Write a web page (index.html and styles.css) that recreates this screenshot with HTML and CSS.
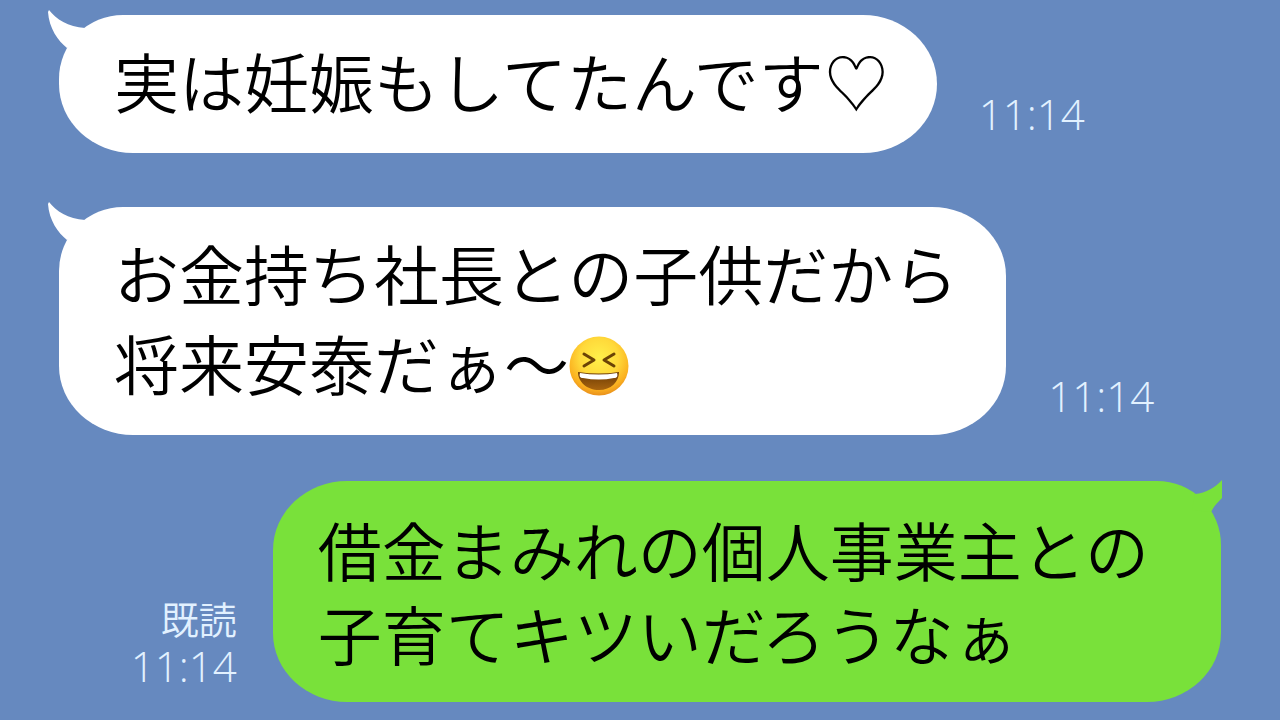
FILE: index.html
```html
<!DOCTYPE html>
<html lang="ja">
<head>
    <meta charset="UTF-8">
    <meta name="viewport" content="width=device-width, initial-scale=1.0">
    <title>トーク</title>
    <link rel="stylesheet" href="styles.css">
</head>
<body>
    <main class="talk">
        <div class="message received">
            <div class="bubble">
                <svg class="tail" viewBox="0 0 38 40" aria-hidden="true">
                    <path d="M1 0 C8 9 20 17 37 18 L38 30 L19 38 C10 31 1 18 0 2 Z"/>
                </svg>
                <p>実は妊娠もしてたんです♡</p>
            </div>
            <div class="meta"><time>11:14</time></div>
        </div>

        <div class="message received">
            <div class="bubble">
                <svg class="tail" viewBox="0 0 38 40" aria-hidden="true">
                    <path d="M1 0 C8 9 20 17 37 18 L38 30 L19 38 C10 31 1 18 0 2 Z"/>
                </svg>
                <p>お金持ち社長との子供だから<br>将来安泰だぁ〜<svg class="emoji" viewBox="0 0 60 60" role="img" aria-label="大笑い">
                    <defs>
                        <radialGradient id="face" cx="50%" cy="36%" r="66%">
                            <stop offset="0" stop-color="#fff04a"/>
                            <stop offset="0.5" stop-color="#ffd93a"/>
                            <stop offset="0.82" stop-color="#fbb01f"/>
                            <stop offset="1" stop-color="#e58a1c"/>
                        </radialGradient>
                        <linearGradient id="mouth" x1="0" y1="0" x2="0" y2="1">
                            <stop offset="0" stop-color="#6b3a05"/>
                            <stop offset="1" stop-color="#a8640f"/>
                        </linearGradient>
                    </defs>
                    <circle cx="30" cy="30" r="29.5" fill="url(#face)"/>
                    <path d="M15 18 L25 24 L15 30 M45 18 L35 24 L45 30" fill="none" stroke="#6b4306" stroke-width="3" stroke-linecap="round" stroke-linejoin="round"/>
                    <path d="M9 36 Q30 39 50 36 C50 46 42 54 30 54 C18 54 9 46 9 36 Z" fill="url(#mouth)"/>
                    <path d="M11 37 Q30 40 48 37 C49 40 48 42 45 42 Q30 45 14 42 C11 42 10 40 11 37 Z" fill="#fff"/>
                </svg></p>
            </div>
            <div class="meta"><time>11:14</time></div>
        </div>

        <div class="message sent">
            <div class="meta"><span class="read">既読</span><time>11:14</time></div>
            <div class="bubble">
                <svg class="tail" viewBox="0 0 38 40" aria-hidden="true">
                    <path d="M38 0 C32 7 22 13 11 14 L8 30 L27 32 C30 26 34 22 38 18 Z"/>
                </svg>
                <p>借金まみれの個人事業主との<br>子育てキツいだろうなぁ</p>
            </div>
        </div>
    </main>
</body>
</html>
```
FILE: styles.css
```css
:root {
    --bg-color: #6689bf;
    --received-color: #fff;
    --sent-color: #79e13a;
    --text-color: #000;
    --meta-color: #e2f1ff;
}

body {
    margin: 0;
    background-color: var(--bg-color);
    color: var(--text-color);
    font-family: "Noto Sans CJK JP", sans-serif;
    font-weight: 350;
}

.talk {
    display: flex;
    flex-direction: column;
    padding: 15px 59px 18px;
}

.message {
    display: flex;
    align-items: flex-end;
    gap: 42px;
}

.message + .message {
    margin-top: 54px;
}

.message + .sent {
    justify-content: flex-end;
    gap: 36px;
    margin-top: 46px;
}

.bubble {
    position: relative; /* しっぽの基準 */
    padding: 20px 48px 28px 55px;
    border-radius: 64px 74px 74px 74px / 64px 69px 69px 69px;
    background-color: var(--received-color);
    white-space: nowrap;
}

.bubble p {
    margin: 0;
    font-size: 65px;
    line-height: 90px;
}

.sent .bubble {
    padding: 25px 72px 28px 45px;
    border-radius: 74px 64px 74px 74px / 69px 64px 69px 69px;
    background-color: var(--sent-color);
}

.sent .bubble p {
    font-size: 64px;
    line-height: 84px;
}

/* 吹き出しのしっぽ */
.tail {
    position: absolute;
    top: -5px;
    left: -11px;
    width: 38px;
    height: 40px;
    fill: var(--received-color);
}

.sent .tail {
    top: -1px;
    right: -1px;
    left: auto;
    fill: var(--sent-color);
}

.emoji {
    width: 60px;
    height: 60px;
    vertical-align: -6px;
}

.meta {
    display: flex;
    flex-direction: column;
    align-items: flex-end;
    padding-bottom: 15px;
    color: var(--meta-color);
    font-size: 42px;
    font-weight: 300;
    line-height: 48px;
}

.sent .meta {
    padding-bottom: 12px;
}

.meta time {
    font-family: "Open Sans", sans-serif;
}

.read {
    font-size: 38px;
    font-weight: 350;
}
```
